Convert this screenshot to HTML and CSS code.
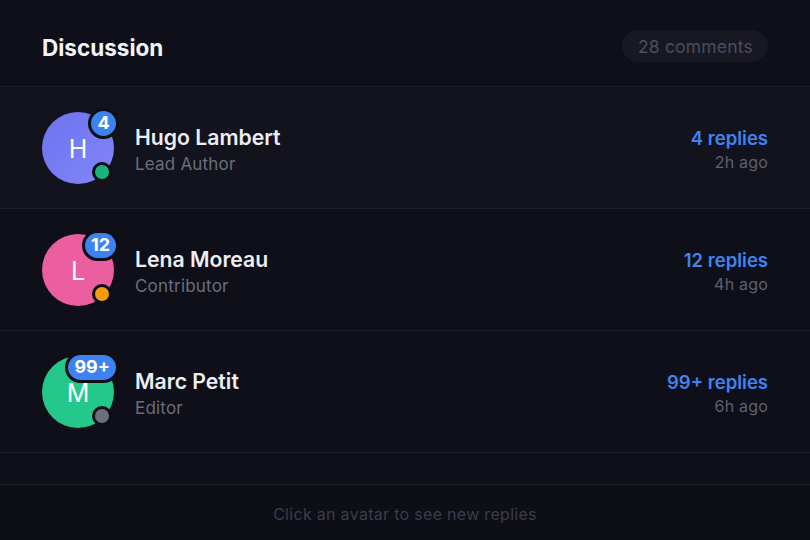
FILE: index.html
```html
<!DOCTYPE html>
<html>
<head>
<meta charset="utf-8">
<link rel="stylesheet" href="styles.css">
</head>
<body>
<div class="panel">
  <header class="head">
    <h1 class="title">Discussion</h1>
    <span class="pill">28 comments</span>
  </header>
  <ul class="list">
    <li class="row active">
      <div class="avatar av-indigo">H
        <span class="badge">4</span>
        <span class="status st-green"></span>
      </div>
      <div class="who">
        <div class="name">Hugo Lambert</div>
        <div class="role">Lead Author</div>
      </div>
      <div class="meta">
        <div class="replies">4 replies</div>
        <div class="time">2h ago</div>
      </div>
    </li>
    <li class="row">
      <div class="avatar av-pink">L
        <span class="badge">12</span>
        <span class="status st-amber"></span>
      </div>
      <div class="who">
        <div class="name">Lena Moreau</div>
        <div class="role">Contributor</div>
      </div>
      <div class="meta">
        <div class="replies">12 replies</div>
        <div class="time">4h ago</div>
      </div>
    </li>
    <li class="row">
      <div class="avatar av-green">M
        <span class="badge">99+</span>
        <span class="status st-gray"></span>
      </div>
      <div class="who">
        <div class="name">Marc Petit</div>
        <div class="role">Editor</div>
      </div>
      <div class="meta">
        <div class="replies">99+ replies</div>
        <div class="time">6h ago</div>
      </div>
    </li>
  </ul>
  <div class="spacer"></div>
  <footer class="foot">Click an avatar to see new replies</footer>
</div>
</body>
</html>
```
FILE: styles.css
```css
* { box-sizing: border-box; }
html, body {
  margin: 0;
  padding: 0;
  background: #0e0f18;
  font-family: Inter, "Noto Sans", sans-serif;
  -webkit-font-smoothing: antialiased;
}
.panel {
  width: 810px;
  height: 540px;
  overflow: hidden;
  display: flex;
  flex-direction: column;
  background: #0e0f18;
}
.head {
  height: 87px;
  padding: 8px 42px 0;
  display: flex;
  align-items: center;
  justify-content: space-between;
  border-bottom: 1px solid #1c1d28;
}
.title {
  margin: 0;
  font-size: 22.5px;
  font-weight: 700;
  color: #f3f4f8;
  letter-spacing: 0;
}
.pill {
  height: 32px;
  padding: 0 15px 0 16px;
  border-radius: 16px;
  background: #171822;
  color: #4c4e5c;
  font-size: 17.5px;
  letter-spacing: 0.2px;
  display: flex;
  align-items: center;
  position: relative;
  top: -1px;
}
.list {
  list-style: none;
  margin: 0;
  padding: 0;
}
.row {
  height: 122px;
  padding: 0 42px;
  display: flex;
  align-items: center;
  border-bottom: 1px solid #1c1d28;
}
.row.active { background: #12131d; }
.avatar {
  position: relative;
  width: 72px;
  height: 72px;
  border-radius: 50%;
  flex: none;
  display: flex;
  align-items: center;
  justify-content: center;
  color: #ffffff;
  font-size: 25px;
  font-weight: 400;
  padding-top: 2px;
}
.av-indigo { background: linear-gradient(135deg, #6d72f0, #8187f7); }
.av-pink { background: #eb5fa1; }
.av-green { background: #24c88b; }
.badge {
  position: absolute;
  top: -4px;
  right: -5px;
  min-width: 31px;
  height: 31px;
  padding: 0 6px;
  border-radius: 16px;
  border: 3px solid #0d0e16;
  background: #3c82f1;
  color: #ffffff;
  font-size: 18px;
  font-weight: 700;
  display: flex;
  align-items: center;
  justify-content: center;
  line-height: 1;
}
.status {
  position: absolute;
  right: 2px;
  bottom: 2px;
  width: 20px;
  height: 20px;
  border-radius: 50%;
  border: 3px solid #0d0e16;
}
.st-green { background: #17b57b; }
.st-amber { background: #f29d0e; }
.st-gray { background: #6e7079; }
.who {
  margin-left: 21px;
  flex: 1;
  display: flex;
  flex-direction: column;
  gap: 3px;
  margin-top: 4px;
}
.name {
  font-size: 21.2px;
  font-weight: 600;
  color: #eceef4;
  line-height: 26px;
}
.role {
  font-size: 17px;
  color: #6b6e7c;
  line-height: 22px;
  letter-spacing: 0.2px;
}
.meta {
  text-align: right;
  display: flex;
  flex-direction: column;
  gap: 3px;
  margin-top: 3px;
}
.replies {
  font-size: 18.5px;
  font-weight: 600;
  color: #3f84f0;
  line-height: 22px;
}
.time {
  font-size: 16px;
  color: #5e6170;
  line-height: 20px;
  letter-spacing: 0.2px;
}
.spacer {
  height: 32px;
  border-bottom: 1px solid #1c1d28;
  flex: none;
}
.foot {
  flex: 1;
  padding-top: 19px;
  text-align: center;
  font-size: 16px;
  letter-spacing: 0.3px;
  color: #3b3d4b;
  background: #0d0e16;
}
```
